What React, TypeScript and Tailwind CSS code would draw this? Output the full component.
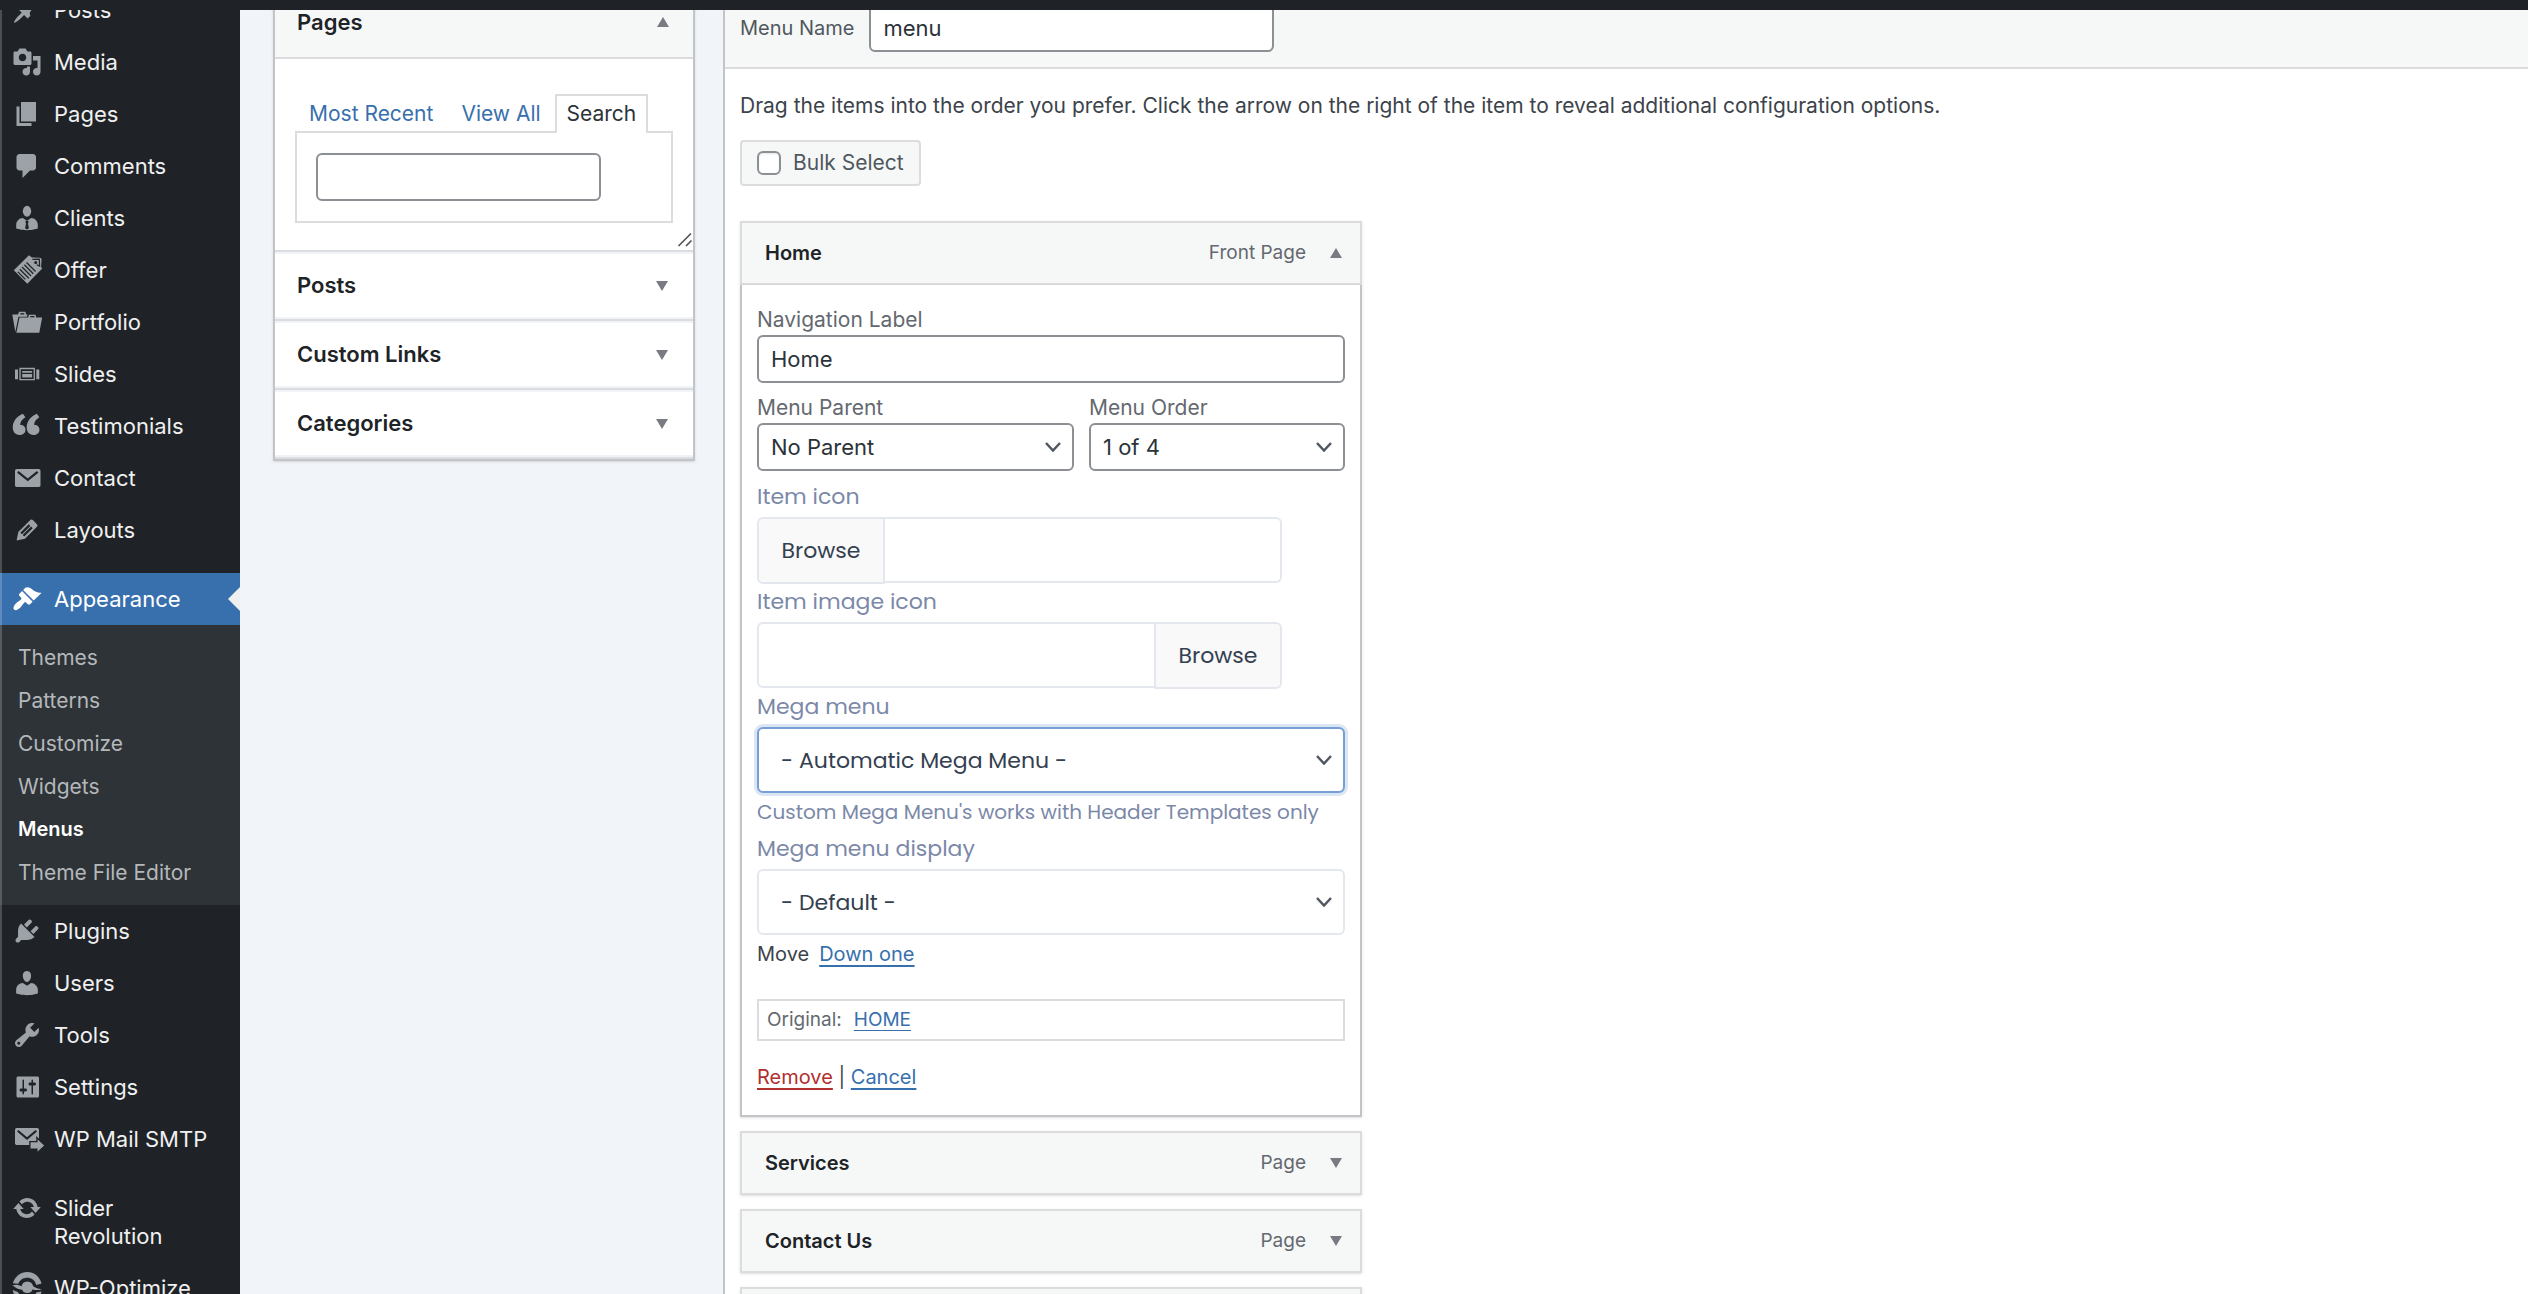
import type { ReactNode } from 'react';

interface MenuEntry {
  label: string;
  icon: ReactNode;
}

const DARK = '#1f2327';

const icons = {
  pin: (
    <path d="M10.44 3.02l1.82-1.82 6.36 6.35-1.83 1.82c-1.05-.68-2.48-.57-3.41.36l-.75.75c-.92.93-1.04 2.35-.35 3.41l-1.83 1.82-2.41-2.41-2.8 2.79c-.42.42-3.38 2.71-3.8 2.29s1.86-3.39 2.28-3.81l2.79-2.79L4.1 9.36l1.83-1.82c1.05.69 2.48.57 3.4-.36l.75-.75c.93-.92 1.05-2.35.36-3.41z" />
  ),
  media: (
    <path d="M13 11V4c0-.55-.45-1-1-1h-1.67L9 1H5L3.67 3H2c-.55 0-1 .45-1 1v7c0 .55.45 1 1 1h10c.55 0 1-.45 1-1zM7 4.5c1.38 0 2.5 1.12 2.5 2.5S8.38 9.5 7 9.5 4.5 8.38 4.5 7 5.62 4.5 7 4.5zM14 6h5v10.5c0 1.38-1.12 2.5-2.5 2.5S14 17.88 14 16.5s1.12-2.5 2.5-2.5c.17 0 .34.02.5.05V9h-3V6zm-4 8.05V13h2v3.5c0 1.38-1.12 2.5-2.5 2.5S7 17.88 7 16.5 8.12 14 9.5 14c.17 0 .34.02.5.05z" />
  ),
  page: <path d="M6 15V2h10v13H6zm-1 1h8v2H3V5h2v11z" />,
  comment: (
    <path d="M5 2h9c1.1 0 2 .9 2 2v7c0 1.1-.9 2-2 2h-2l-5 5v-5H5c-1.1 0-2-.9-2-2V4c0-1.1.9-2 2-2z" />
  ),
  businessman: (
    <>
      <ellipse cx="10" cy="5.5" rx="2.8" ry="3.6" />
      <path d="M7.2 10L10 11.8 12.8 10c2.6 0 4.4 2.3 4.4 4.5V17s-3.6 1.1-7.2 1.1S2.8 17 2.8 17v-2.5c0-2.2 1.9-4.5 4.4-4.5z" />
      <path d="M9.2 11.8h1.6l.3 1-.5.8.7 3.2-1.3.9-1.3-.9.7-3.2-.5-.8z" fill={DARK} />
    </>
  ),
  tickets: (
    <>
      <path d="M1.2 10.2L11.3.2l2 1.5 5.2.1c.8 0 1.3.5 1.2 1.3l-.3 4.5.6 1.6L10.2 19.2z" />
      <path d="M13.6 2.9l4.6-.1.2 4.6-1.900-.9" fill="none" stroke={DARK} strokeWidth=".8" />
      <circle cx="15.8" cy="5" r="1" fill={DARK} />
      <path
        d="M9.700 5l6 6M8.200 6.500l6 6M6.700 8l6 6M5.200 9.500l6 6M3.900 11.200l5 5"
        fill="none"
        stroke={DARK}
        strokeWidth=".8"
      />
    </>
  ),
  portfolio: (
    <>
      <path d="M.2 5h3.9l.6-1.8h4.2L9.5 5h.8L10 6.5H4.3L2.2 16.7z" />
      <path d="M5.6 4.1h2.6V5H5.600z" fill={DARK} />
      <path d="M5 7h5.800l.5-1.900h4.400l.4 1.900h4L18.200 17.200H2.900z" />
      <path d="M12.200 6h2.700v.9h-2.700z" fill={DARK} />
    </>
  ),
  slides: (
    <>
      <path d="M2 7h2v6.500H2zM16.200 7h2v6.500h-2z" />
      <path d="M4.900 5.900h10.400v8.300H4.900zm.9.900v6.500h8.600V6.800z" fillRule="evenodd" />
      <path d="M6.800 8h6.600v1.100H6.800zM6.800 10h6.600v2.300H6.800z" />
    </>
  ),
  quote: (
    <>
      <path d="M7.300 1.900l1.600 2.200C6.700 5.400 5.300 7.400 5.500 9.300c2-.2 3.600 1.200 3.500 3.300C8.900 14.800 7.100 16 5 16 2 16 .5 13.700.5 10.900.5 6.900 3.400 3.400 7.300 1.900z" />
      <path d="M16.600 1.900l1.600 2.200c-2.200 1.300-3.600 3.300-3.400 5.200 2-.2 3.600 1.200 3.500 3.300-.1 2.200-1.900 3.400-4 3.400-3 0-4.500-2.300-4.500-5.100 0-4 2.900-7.500 6.800-9z" />
    </>
  ),
  email: (
    <>
      <rect x="2" y="4" width="17" height="12" rx="1.2" />
      <path d="M3.900 5.900l6.600 5.300 6.600-5.300" fill="none" stroke={DARK} strokeWidth="1.5" />
    </>
  ),
  edit: (
    <path d="M13.89 3.39l2.71 2.72c.46.46.42 1.24.03 1.64l-8.01 8.02-5.56 1.16 1.16-5.58s7.6-7.63 7.99-8.03c.39-.39 1.22-.39 1.68.07zm-2.73 2.79l-5.59 5.61 1.11 1.11 5.54-5.65zm-2.97 8.23l5.58-5.6-1.07-1.08-5.59 5.6z" />
  ),
  brush: (
    <path d="M14.48 11.06L7.41 3.99l1.5-1.5c.5-.56 2.3-.47 3.51.32 1.21.8 1.43 1.28 2.91 2.1 1.18.64 2.45 1.26 4.45.85zm-.71.71L6.7 4.7 4.93 6.47c-.39.39-.39 1.02 0 1.41l1.06 1.06c.39.39.39 1.03 0 1.42-.6.6-1.43 1.11-2.21 1.69-.35.26-.7.53-1.01.84C1.43 14.23.4 16.08 1.4 17.07c.99 1 2.84-.03 4.18-1.36.31-.31.58-.66.85-1.02.57-.78 1.08-1.61 1.69-2.21.39-.39 1.02-.39 1.41 0l1.06 1.06c.39.39 1.02.39 1.41 0z" />
  ),
  plug: (
    <path d="M13.11 4.36L9.87 7.6 8 5.73l3.24-3.24c.35-.34 1.05-.2 1.56.32.52.51.66 1.21.31 1.55zm-8 1.77l.91-1.12 9.01 9.01-1.19.84c-.71.71-2.63 1.16-3.82 1.16H6.14L4.9 17.26c-.59.59-1.54.59-2.12 0-.59-.58-.59-1.53 0-2.12l1.24-1.24v-3.88c0-1.13.4-3.19 1.09-3.89zm7.26 3.97l3.24-3.24c.34-.35 1.04-.21 1.55.31.52.51.66 1.21.31 1.55l-3.24 3.25z" />
  ),
  user: (
    <path d="M10 9.25c-2.27 0-2.73-3.44-2.73-3.44C7 4.02 7.82 2 9.97 2c2.16 0 2.98 2.02 2.71 3.81 0 0-.41 3.44-2.68 3.44zm0 2.57L12.72 10c2.39 0 4.52 2.33 4.52 4.53v2.49s-3.65 1.13-7.24 1.13c-3.65 0-7.24-1.13-7.24-1.13v-2.49c0-2.25 1.94-4.48 4.47-4.48z" />
  ),
  wrench: (
    <path d="M16.68 9.77c-1.34 1.34-3.3 1.67-4.95.99l-5.41 6.52c-.99.99-2.59.99-3.58 0s-.99-2.59 0-3.57l6.52-5.42c-.68-1.65-.35-3.61.99-4.95 1.28-1.28 3.12-1.62 4.72-1.06l-2.89 2.89 2.82 2.82 2.86-2.87c.53 1.58.18 3.39-1.08 4.65zM3.81 16.21c.4.39 1.04.39 1.43 0 .4-.4.4-1.04 0-1.43-.39-.4-1.03-.4-1.43 0-.39.39-.39 1.03 0 1.43z" />
  ),
  sliders: (
    <path d="M18 16V4c0-.55-.45-1-1-1H4c-.55 0-1 .45-1 1v12c0 .55.45 1 1 1h13c.55 0 1-.45 1-1zM8 11h1c.55 0 1 .45 1 1s-.45 1-1 1H8v1.5c0 .28-.22.5-.5.5s-.5-.22-.5-.5V13H6c-.55 0-1-.45-1-1s.45-1 1-1h1V5.5c0-.28.22-.5.5-.5s.5.22.5.5V11zm5-2h-1c-.55 0-1-.45-1-1s.45-1 1-1h1V5.5c0-.28.22-.5.5-.5s.5.22.5.5V7h1c.55 0 1 .45 1 1s-.45 1-1 1h-1v5.5c0 .28-.22.5-.5.5s-.5-.22-.5-.5V9z" />
  ),
  mailSend: (
    <>
      <rect x="2" y="2.7" width="16" height="11.3" rx="1.1" />
      <path d="M3.8 4.5L10 9.7l6.200-5.200" fill="none" stroke={DARK} strokeWidth="1.4" />
      <path
        d="M11.900 11.700h4.700V9.100l5.500 5.200-5.500 5.200v-2.700h-4.700z"
        stroke={DARK}
        strokeWidth=".9"
      />
    </>
  ),
  update: (
    <path d="M10.2 3.28c3.53 0 6.43 2.61 6.92 6h2.08l-3.5 4-3.5-4h2.32c-.45-1.97-2.21-3.45-4.32-3.45-1.45 0-2.73.71-3.54 1.78L4.95 5.66C6.23 4.2 8.11 3.28 10.2 3.28zm-.4 13.44c-3.52 0-6.43-2.61-6.92-6H.8l3.5-4c1.17 1.33 2.33 2.67 3.5 4H5.48c.45 1.97 2.21 3.45 4.32 3.45 1.45 0 2.73-.71 3.54-1.78l1.71 1.95c-1.28 1.46-3.15 2.38-5.25 2.38z" />
  ),
  optimize: (
    <>
      <path d="M.6 6.800C2 2.400 5.700-.6 10.200-.6s8.200 3 9.500 7.600l-3.500 1C15.300 4.800 13 3.200 10.200 3.200S5.200 4.600 4.200 7.200z" />
      <circle cx="10.200" cy="9.500" r="3.900" />
      <path d="M.3 8.200c2.700-.9 5-.4 7 1.300l-.6 1.600C4.500 11 2.300 10 .3 8.200zM20 10.600c-2.700 1.200-5.300 1-7.400-.3l.7-2.100c2 1.700 4.200 2.600 6.700 2.400z" />
      <path d="M.4 11.300l3.500 1.300c1.200 2.400 3.500 3.900 6.300 3.900s5-1.400 6.200-3.700l3.400-.5c-1.300 4.600-5 7.700-9.600 7.700-4.700 0-8.700-3.500-9.800-8.700z" />
    </>
  ),
};

const contentMenu: MenuEntry[] = [
  { label: 'Posts', icon: icons.pin },
  { label: 'Media', icon: icons.media },
  { label: 'Pages', icon: icons.page },
  { label: 'Comments', icon: icons.comment },
  { label: 'Clients', icon: icons.businessman },
  { label: 'Offer', icon: icons.tickets },
  { label: 'Portfolio', icon: icons.portfolio },
  { label: 'Slides', icon: icons.slides },
  { label: 'Testimonials', icon: icons.quote },
  { label: 'Contact', icon: icons.email },
  { label: 'Layouts', icon: icons.edit },
];

const appearanceMenu = ['Themes', 'Patterns', 'Customize', 'Widgets', 'Menus', 'Theme File Editor'];

const systemMenu: MenuEntry[] = [
  { label: 'Plugins', icon: icons.plug },
  { label: 'Users', icon: icons.user },
  { label: 'Tools', icon: icons.wrench },
  { label: 'Settings', icon: icons.sliders },
  { label: 'WP Mail SMTP', icon: icons.mailSend },
];

const pluginMenu: MenuEntry[] = [
  { label: 'Slider Revolution', icon: icons.update },
  { label: 'WP-Optimize', icon: icons.optimize },
];

function SidebarLink({ entry }: { entry: MenuEntry }) {
  return (
    <li>
      <a href="#" className="flex gap-3 py-3 pl-3 pr-6 text-[22px] leading-7 text-[#f0f0f1]">
        <svg viewBox="0 0 20 20" className="-my-px size-[30px] shrink-0 overflow-visible fill-[#9ca2a7]">
          {entry.icon}
        </svg>
        <span>{entry.label}</span>
      </a>
    </li>
  );
}

function Sidebar() {
  return (
    <nav className="relative w-60 shrink-0 bg-[#1f2327]">
      <ul>
        {contentMenu.map((entry) => (
          <SidebarLink key={entry.label} entry={entry} />
        ))}
      </ul>

      {/* current section */}
      <div className="mt-[17px]">
        <a href="#" className="relative flex gap-3 bg-[#3870ad] py-3 pl-3 text-[22px] leading-7 text-white">
          <svg viewBox="0 0 20 20" className="-my-px size-[30px] shrink-0 fill-white">
            {icons.brush}
          </svg>
          <span>Appearance</span>
          <svg viewBox="0 0 12 24" className="absolute right-0 top-3.5 h-6 w-3 fill-[#f0f0f1]">
            <path d="M12 0v24L0 12z" />
          </svg>
        </a>
        <ul className="bg-[#2e3337] py-[11px]">
          {appearanceMenu.map((label) => (
            <li key={label}>
              <a
                href="#"
                className={
                  label === 'Menus'
                    ? 'block pl-[18px] text-[20px] font-semibold leading-[43px] text-white'
                    : 'block pl-[18px] text-[21px] leading-[43px] text-[#b4b8bb]'
                }
              >
                {label}
              </a>
            </li>
          ))}
        </ul>
      </div>

      <ul>
        {systemMenu.map((entry) => (
          <SidebarLink key={entry.label} entry={entry} />
        ))}
      </ul>
      <ul className="mt-[17px]">
        {pluginMenu.map((entry) => (
          <SidebarLink key={entry.label} entry={entry} />
        ))}
      </ul>

      <div className="absolute inset-y-0 left-0 w-0.5 bg-white/20" />
    </nav>
  );
}

function Arrow({ up = false }: { up?: boolean }) {
  return (
    <svg viewBox="0 0 12 10" className="h-2.5 w-3 shrink-0 fill-[#787c82]">
      <path d={up ? 'M6 0l6 10H0z' : 'M0 0h12L6 10z'} />
    </svg>
  );
}

function AccordionRow({ title }: { title: string }) {
  return (
    <h3 className="border-b-2 border-[#dcdcde] shadow-[inset_0_2px_0_#f0f4f8,inset_0_-2px_0_#f0f4f8]">
      <button
        type="button"
        className="flex h-[67px] w-full items-center justify-between pl-[22px] pr-[25px] text-left text-[22px] font-semibold text-[#1d2327]"
      >
        {title}
        <Arrow />
      </button>
    </h3>
  );
}

function AddItems() {
  return (
    <aside className="ml-[33px] w-[422px] shrink-0 self-start border-2 border-[#c3c4c7] bg-white shadow-sm">
      <h3 className="border-b-2 border-[#dcdcde] bg-[#f6f7f7]">
        <button
          type="button"
          className="flex w-full items-center justify-between pb-5 pl-[22px] pr-6 pt-[21px] text-left text-[22px] font-semibold leading-[30px] text-[#1d2327]"
        >
          Pages
          <Arrow up />
        </button>
      </h3>

      <div className="relative border-b-2 border-[#dcdcde] px-5 pb-[27px] pt-[35px]">
        <div className="relative z-10 -mb-0.5 flex text-[21px] leading-9">
          <a href="#" className="px-3.5 pt-0.5 text-[#3870ad]">
            Most Recent
          </a>
          <a href="#" className="px-3.5 pt-0.5 text-[#3870ad]">
            View All
          </a>
          <a href="#" className="border-2 border-b-0 border-[#dcdcde] bg-white px-2.5 pb-px text-[#2c3338]">
            Search
          </a>
        </div>
        <div className="border-2 border-[#dcdcde] px-[19px] py-5">
          <input
            type="search"
            aria-label="Search"
            className="block h-12 w-[285px] rounded-md border-2 border-[#8c8f94] bg-white px-3 text-[22px]"
          />
        </div>
        <svg
          viewBox="0 0 16 16"
          className="absolute bottom-0.5 right-0 size-4 stroke-[#555555]"
          fill="none"
          strokeWidth="1.7"
        >
          <path d="M1.5 14L14 1.5M9 14l5.500-5.500" />
        </svg>
      </div>

      <AccordionRow title="Posts" />
      <AccordionRow title="Custom Links" />
      <AccordionRow title="Categories" />
    </aside>
  );
}

interface SelectBoxProps {
  id: string;
  value: string;
  className: string;
}

function SelectBox({ id, value, className }: SelectBoxProps) {
  return (
    <div className="relative">
      <select id={id} className={`block w-full appearance-none bg-white outline-none ${className}`}>
        <option>{value}</option>
      </select>
      <svg
        viewBox="0 0 16 10"
        className="pointer-events-none absolute right-[13px] top-1/2 h-2.5 w-4 -translate-y-1/2 stroke-[#50575e]"
        fill="none"
        strokeWidth="2.5"
      >
        <path d="M1 1l7 7.5L15 1" />
      </svg>
    </div>
  );
}

const wpInput = 'h-12 rounded-md border-2 border-[#8c8f94] px-3 text-[22px] text-[#2c3338]';
const wpLabel = 'block text-[21px] leading-[30px] text-[#646970]';
const themeLabel = 'block mb-[5px] text-[22px] leading-[30px] text-[#7b88a8]';
const browseButton = 'h-[67px] w-32 shrink-0 border-2 border-[#e4e8ee] bg-[#f9f9f9] text-[22px] text-[#334050]';

function ItemSettings() {
  return (
    <div className="border-2 border-t-0 border-[#c3c4c7] bg-white px-[15px] pb-[23px] pt-5 text-[20px] shadow-sm">
      <label htmlFor="nav-label" className={wpLabel}>
        Navigation Label
      </label>
      <input id="nav-label" type="text" defaultValue="Home" className={`block w-full ${wpInput}`} />

      <div className="mt-2.5 flex gap-[15px]">
        <div className="w-[317px]">
          <label htmlFor="menu-parent" className={wpLabel}>
            Menu Parent
          </label>
          <SelectBox id="menu-parent" value="No Parent" className={wpInput} />
        </div>
        <div className="flex-1">
          <label htmlFor="menu-order" className={wpLabel}>
            Menu Order
          </label>
          <SelectBox id="menu-order" value="1 of 4" className={wpInput} />
        </div>
      </div>

      <div className="font-['Poppins','Inter',sans-serif]">
        <label htmlFor="item-icon" className={`mt-[11px] ${themeLabel}`}>
          Item icon
        </label>
        <div className="flex h-[66px] w-[525px] max-w-full">
          <button type="button" className={`rounded-l-md ${browseButton}`}>
            Browse
          </button>
          <input
            id="item-icon"
            type="text"
            className="min-w-0 flex-1 rounded-r-md border-2 border-l-0 border-[#e4e8ee] bg-white px-6"
          />
        </div>

        <label htmlFor="item-image" className={`mt-1 ${themeLabel}`}>
          Item image icon
        </label>
        <div className="flex h-[66px] w-[525px] max-w-full">
          <input
            id="item-image"
            type="text"
            className="min-w-0 flex-1 rounded-l-md border-2 border-r-0 border-[#e4e8ee] bg-white px-6"
          />
          <button type="button" className={`rounded-r-md ${browseButton}`}>
            Browse
          </button>
        </div>

        <label htmlFor="mega-menu" className={`mt-1 ${themeLabel}`}>
          Mega menu
        </label>
        <SelectBox
          id="mega-menu"
          value="- Automatic Mega Menu -"
          className="h-[66px] rounded-md border-2 border-[#76a0d5] px-[22px] text-[22px] text-[#334050] ring-3 ring-[#dbe6f4]"
        />
        <p className="mt-1 text-[20px] leading-[30px] text-[#7b88a8]">
          Custom Mega Menu's works with Header Templates only
        </p>

        <label htmlFor="mega-display" className={`mt-[7px] ${themeLabel}`}>
          Mega menu display
        </label>
        <SelectBox
          id="mega-display"
          value="- Default -"
          className="h-[66px] rounded-md border-2 border-[#e4e8ee] px-[22px] text-[22px] text-[#334050]"
        />
      </div>

      <p className="mt-1 leading-[30px] text-[#3c434a]">
        Move
        <a href="#" className="ml-2.5 text-[#3870ad] underline underline-offset-4">
          Down one
        </a>
      </p>

      <p className="mt-[30px] border-2 border-[#dcdcde] px-2 text-[19px] leading-[38px] text-[#646970]">
        Original:
        <a href="#" className="ml-3 text-[#3870ad] underline underline-offset-4">
          HOME
        </a>
      </p>

      <p className="mt-[21px] leading-[30px] text-[#3c434a]">
        <a href="#" className="text-[#b0302f] underline underline-offset-4">
          Remove
        </a>{' '}
        |{' '}
        <a href="#" className="text-[#3870ad] underline underline-offset-4">
          Cancel
        </a>
      </p>
    </div>
  );
}

interface MenuItemProps {
  title: string;
  type: string;
  open?: boolean;
}

function MenuItem({ title, type, open = false }: MenuItemProps) {
  return (
    <li>
      <div className="flex h-16 items-center border-2 border-[#dcdcde] bg-[#f6f7f7] pl-[23px] pr-[18px] shadow-sm">
        <span className="flex-1 text-[20px] font-semibold text-[#1d2327]">{title}</span>
        <span className="text-[19px] text-[#646970]">{type}</span>
        <button type="button" aria-label={`Edit ${title}`} className="ml-6">
          <Arrow up={open} />
        </button>
      </div>
      {open && <ItemSettings />}
    </li>
  );
}

function MenuStructure() {
  return (
    <main className="ml-7 min-w-0 flex-1 border-l-2 border-[#c3c4c7] bg-white">
      <div className="flex items-center gap-[15px] border-b-2 border-[#dcdcde] bg-[#f6f7f7] px-[15px] pb-[15px] pt-5">
        <label htmlFor="menu-name" className="text-[20px] text-[#50575e]">
          Menu Name
        </label>
        <input id="menu-name" type="text" defaultValue="menu" className={`w-[405px] bg-white ${wpInput}`} />
      </div>

      <div className="px-[15px] pt-[22px]">
        <p className="text-[21px] leading-[30px] text-[#3c434a]">
          Drag the items into the order you prefer. Click the arrow on the right of the item to reveal additional
          configuration options.
        </p>

        <label className="mt-[19px] inline-flex h-[46px] items-center gap-3 rounded-sm border-2 border-[#dcdcde] bg-[#f6f7f7] px-[15px] text-[21px] text-[#50575e]">
          <input
            type="checkbox"
            className="size-6 appearance-none rounded-md border-2 border-[#8c8f94] bg-white shadow-[inset_0_1px_2px_rgba(0,0,0,0.1)]"
          />
          Bulk Select
        </label>

        <ul className="mt-[35px] flex w-[622px] max-w-full flex-col gap-3.5">
          <MenuItem title="Home" type="Front Page" open />
          <MenuItem title="Services" type="Page" />
          <MenuItem title="Contact Us" type="Page" />
          <MenuItem title="" type="" />
        </ul>
      </div>
    </main>
  );
}

export default function App() {
  return (
    <div className="flex h-screen flex-col overflow-hidden bg-[#f1f5f9] font-['Inter',sans-serif]">
      <header className="relative z-20 h-2.5 shrink-0 bg-[#1f2327]" />
      {/* page body, scrolled under the admin bar */}
      <div className="-mt-[26px] flex min-h-0 flex-1">
        <Sidebar />
        <AddItems />
        <MenuStructure />
      </div>
    </div>
  );
}
